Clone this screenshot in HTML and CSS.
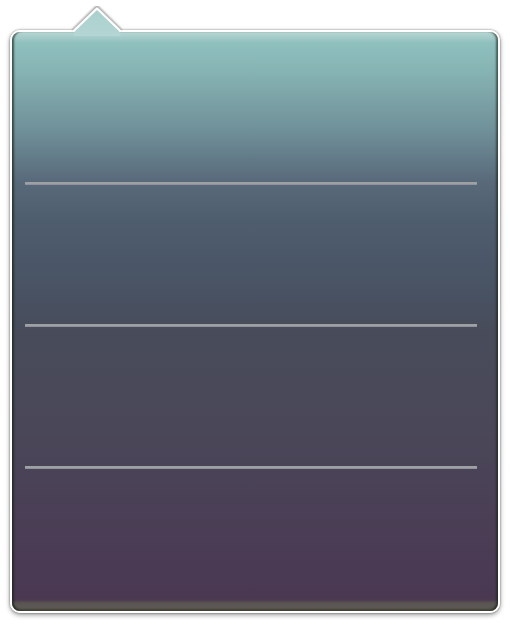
FILE: index.html
```html
<!DOCTYPE html>
<html>
<head>
<meta charset="utf-8">
<link rel="stylesheet" href="styles.css">
</head>
<body>
<div class="popover">
  <svg class="arrow" width="52" height="30" viewBox="0 0 52 30">
    <defs>
      <linearGradient id="ag" x1="0" y1="0" x2="0" y2="1">
        <stop offset="0" stop-color="#a9d0ce"/>
        <stop offset="1" stop-color="#b4d6d4"/>
      </linearGradient>
      <filter id="blur" x="-20%" y="-40%" width="140%" height="180%">
        <feGaussianBlur stdDeviation="1.3"/>
      </filter>
    </defs>
    <polyline points="2,24 26,0.5 50,24" fill="none" stroke="rgba(0,0,0,0.45)" stroke-width="2" filter="url(#blur)"/>
    <polygon points="4,25 26,3.5 48,25 50,30 2,30" fill="url(#ag)"/>
    <polyline points="2,25.5 26,2.5 50,25.5" fill="none" stroke="#ffffff" stroke-width="2.2" stroke-linejoin="round"/>
  </svg>
  <div class="list">
    <div class="row first"></div>
    <div class="sep"></div>
    <div class="row"></div>
    <div class="sep"></div>
    <div class="row"></div>
    <div class="sep"></div>
    <div class="row last"></div>
  </div>
</div>
</body>
</html>
```

FILE: styles.css
```css
html, body {
  margin: 0;
  padding: 0;
  background: #ffffff;
}

body {
  width: 510px;
  height: 624px;
  overflow: hidden;
  font-family: "Liberation Sans", Arial, sans-serif;
}

.popover {
  position: relative;
  box-sizing: border-box;
  margin: 30px 0 0 10px;
  width: 490px;
  height: 583px;
  border: 2px solid #ffffff;
  border-radius: 10px;
  box-shadow: 0 0 2px rgba(0, 0, 0, 0.5), 0 2px 5px rgba(0, 0, 0, 0.4);
  background: linear-gradient(to bottom,
    #b7d6d4 0px,
    #a2cac8 6px,
    #8ec0be 11px,
    #86b3b3 40px,
    #6f8f98 100px,
    #58697a 150px,
    #4e5d6e 190px,
    #485263 260px,
    #484c5a 300px,
    #4a4758 400px,
    #4a4056 470px,
    #4a3852 565px,
    #4b3a50 568px,
    #5a5552 571px,
    #5e5a55 579px);
  overflow: visible;
}

.popover::after {
  content: "";
  position: absolute;
  inset: 0;
  border-radius: 8px;
  box-shadow:
    inset 3px 0 2px -1px rgba(25, 35, 25, 0.65),
    inset -3px 0 2px -1px rgba(25, 35, 25, 0.6),
    inset 0 -3px 2px -1px rgba(40, 45, 25, 0.5);
  pointer-events: none;
}

.arrow {
  position: absolute;
  left: 59px;
  top: -26px;
  z-index: 2;
}

.list {
  display: flex;
  flex-direction: column;
  padding: 0 21px 0 13px;
}

.row {
  height: 139px;
}

.row.first {
  height: 150px;
}

.sep {
  height: 2px;
  background: #9da1a1;
  border-bottom: 1px solid rgba(110, 100, 160, 0.25);
}
```
